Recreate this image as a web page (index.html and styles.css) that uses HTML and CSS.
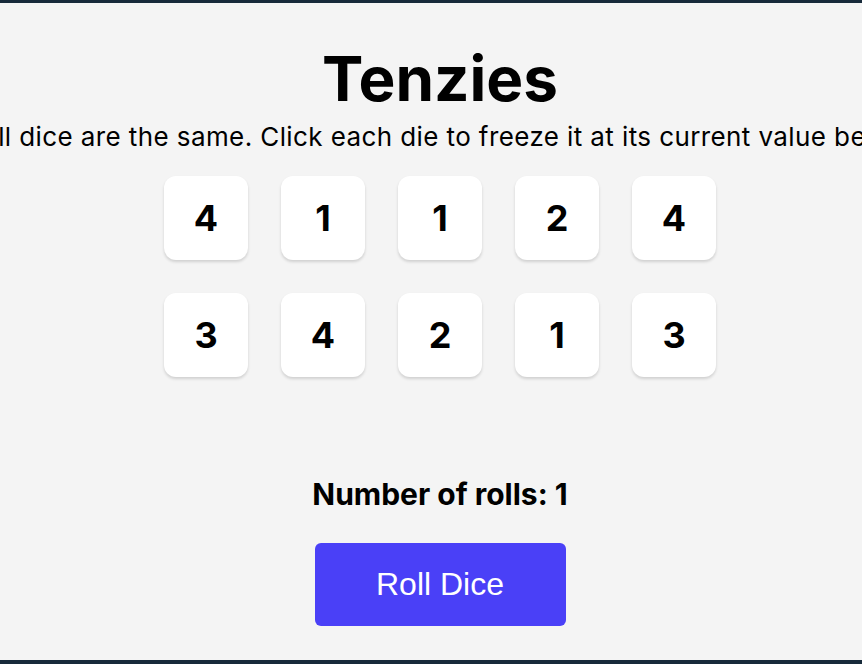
FILE: index.html
```html
<!DOCTYPE html>
<html>
<head>
<meta charset="utf-8">
<link rel="stylesheet" href="styles.css">
</head>
<body>
<main class="game">
  <h1 class="title">Tenzies</h1>
  <p class="instructions">Roll until all dice are the same. Click each die to freeze it at its current value between rolls.</p>
  <div class="dice-grid">
    <button class="die">4</button>
    <button class="die">1</button>
    <button class="die">1</button>
    <button class="die">2</button>
    <button class="die">4</button>
    <button class="die">3</button>
    <button class="die">4</button>
    <button class="die">2</button>
    <button class="die">1</button>
    <button class="die">3</button>
  </div>
  <p class="rolls">Number of rolls: 1</p>
  <button class="roll-btn">Roll Dice</button>
</main>
</body>
</html>
```
FILE: styles.css
```css
html, body {
  margin: 0;
  padding: 0;
}
body {
  background: #172a3a;
  width: 862px;
  height: 664px;
  overflow: hidden;
  font-family: Inter, "Liberation Sans", sans-serif;
}
.game {
  margin-top: 3px;
  width: 880px;
  height: 657px;
  background: #f4f4f4;
  display: flex;
  flex-direction: column;
  align-items: center;
  overflow: hidden;
}
.title {
  margin: 38px 0 0;
  font-size: 62px;
  font-weight: 700;
  line-height: 76px;
  color: #000;
}
.instructions {
  margin: 0;
  white-space: nowrap;
  font-size: 26px;
  letter-spacing: 0.4px;
  line-height: 40px;
  color: #000;
}
.dice-grid {
  margin-top: 19px;
  display: grid;
  grid-template-columns: repeat(5, 84px);
  grid-auto-rows: 84px;
  gap: 33px;
}
.die {
  border: none;
  background: #fff;
  border-radius: 12px;
  box-shadow: 0 2px 3px rgba(0, 0, 0, 0.15);
  font-family: Inter, "Liberation Sans", sans-serif;
  font-size: 36px;
  font-weight: 700;
  color: #000;
  padding: 0;
}
.rolls {
  margin: 99px 0 0;
  font-size: 30px;
  font-weight: 700;
  line-height: 36px;
}
.roll-btn {
  margin-top: 31px;
  width: 251px;
  height: 83px;
  border: none;
  border-radius: 6px;
  background: #4a40f7;
  color: #fff;
  font-family: "Liberation Sans", Arial, sans-serif;
  font-size: 32px;
  padding: 0;
}
```
